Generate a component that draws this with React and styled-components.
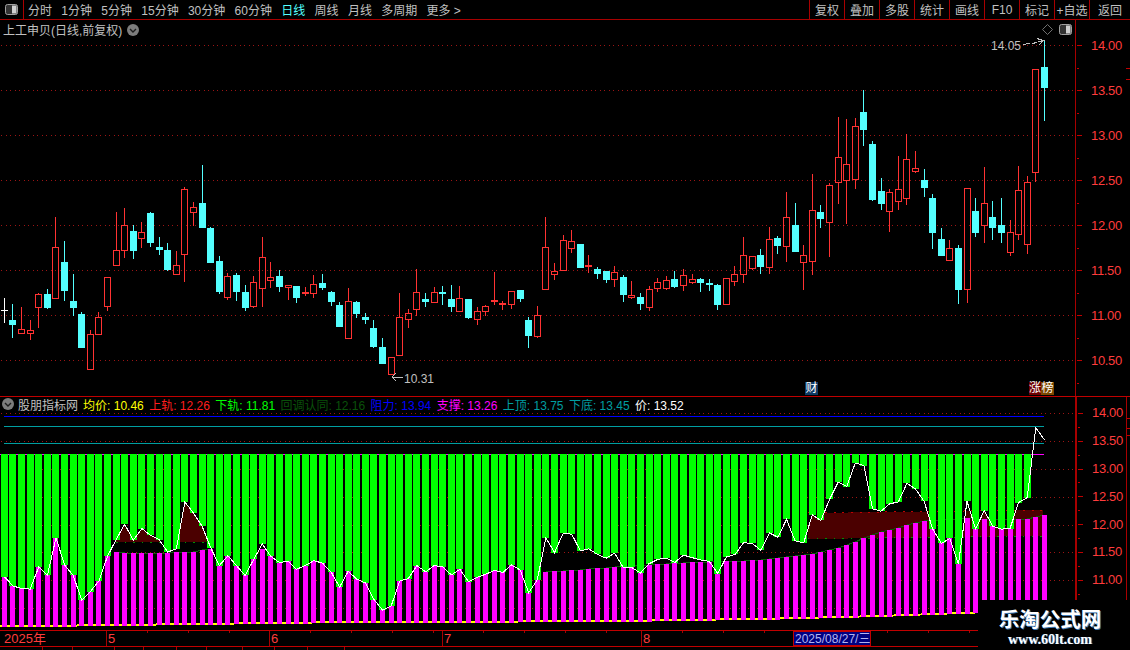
import styled, { createGlobalStyle } from "styled-components";

const GlobalStyle = createGlobalStyle`
    html, body {
        margin: 0;
        padding: 0;
        background: #000000;
    }
`;

const FONT = `"Liberation Sans", "Noto Sans CJK SC", sans-serif`;
const BORDER = "#a80000";
const GRID = "#9c1414";

// [high, bodyTop, bodyBottom, low, kind] in screen y, r = hollow red, c = cyan, w = doji
const CANDLES = [
    [298, 310, 310, 323, "w"], [304, 320, 325, 338, "c"], [307, 329, 334, 334, "r"], [320, 330, 334, 340, "r"],
    [293, 294, 308, 328, "r"], [289, 294, 308, 309, "c"], [217, 247, 299, 299, "r"], [241, 262, 291, 301, "c"],
    [274, 301, 308, 316, "c"], [312, 314, 348, 348, "c"], [330, 334, 370, 370, "r"], [312, 317, 335, 335, "r"],
    [277, 277, 307, 311, "r"], [212, 250, 266, 266, "r"], [208, 225, 251, 258, "r"], [225, 231, 251, 259, "c"],
    [222, 232, 239, 248, "r"], [212, 213, 243, 247, "c"], [237, 247, 250, 255, "c"], [243, 250, 270, 271, "c"],
    [251, 265, 275, 275, "r"], [187, 189, 255, 282, "r"], [202, 207, 213, 226, "r"], [165, 203, 228, 228, "c"],
    [227, 228, 263, 263, "c"], [256, 261, 292, 294, "c"], [273, 276, 298, 300, "r"], [273, 275, 292, 301, "c"],
    [285, 292, 308, 311, "c"], [276, 282, 307, 308, "r"], [237, 257, 289, 307, "r"], [262, 277, 281, 288, "r"],
    [270, 276, 287, 292, "c"], [285, 285, 288, 300, "r"], [286, 286, 298, 303, "c"], [287, 292, 294, 296, "r"],
    [275, 284, 294, 298, "r"], [274, 283, 288, 290, "c"], [291, 292, 302, 306, "c"], [302, 305, 327, 327, "c"],
    [288, 301, 339, 339, "r"], [301, 302, 314, 318, "c"], [313, 317, 320, 324, "c"], [320, 328, 347, 348, "c"],
    [338, 347, 364, 364, "c"], [357, 357, 375, 375, "r"], [293, 317, 356, 356, "r"], [309, 313, 320, 328, "r"],
    [269, 292, 310, 316, "r"], [293, 299, 302, 307, "c"], [287, 292, 303, 303, "r"], [286, 292, 294, 305, "c"],
    [285, 299, 307, 312, "c"], [286, 298, 312, 312, "r"], [299, 299, 318, 319, "c"], [307, 311, 320, 325, "r"],
    [305, 306, 312, 316, "r"], [272, 300, 302, 305, "r"], [301, 303, 305, 310, "r"], [291, 291, 305, 309, "r"],
    [290, 290, 299, 302, "c"], [317, 320, 336, 348, "c"], [306, 315, 337, 338, "r"], [217, 247, 290, 290, "r"],
    [263, 271, 275, 280, "r"], [235, 240, 271, 271, "r"], [230, 241, 249, 253, "r"], [244, 244, 268, 268, "c"],
    [255, 265, 267, 273, "r"], [267, 269, 274, 279, "c"], [271, 271, 280, 283, "c"], [266, 272, 280, 287, "r"],
    [275, 277, 295, 302, "c"], [281, 295, 298, 299, "r"], [293, 297, 304, 310, "c"], [286, 289, 308, 311, "r"],
    [278, 282, 289, 292, "r"], [276, 280, 289, 290, "r"], [271, 279, 287, 288, "c"], [269, 275, 286, 291, "r"],
    [274, 279, 283, 284, "r"], [278, 279, 283, 292, "c"], [279, 283, 285, 291, "c"], [284, 285, 305, 310, "c"],
    [278, 278, 305, 305, "r"], [266, 274, 282, 286, "r"], [237, 255, 275, 283, "r"], [256, 256, 269, 270, "r"],
    [249, 255, 267, 274, "c"], [227, 239, 268, 274, "r"], [236, 238, 246, 254, "c"], [192, 217, 247, 262, "r"],
    [203, 225, 252, 252, "c"], [245, 255, 263, 290, "r"], [174, 210, 262, 275, "r"], [205, 212, 219, 228, "c"],
    [183, 185, 223, 257, "r"], [117, 157, 183, 204, "r"], [119, 164, 181, 224, "r"], [118, 126, 180, 189, "r"],
    [90, 112, 130, 146, "c"], [141, 144, 200, 201, "c"], [178, 191, 204, 210, "c"], [189, 192, 212, 232, "r"],
    [156, 189, 202, 210, "r"], [134, 159, 199, 205, "r"], [151, 168, 172, 173, "r"], [169, 180, 188, 197, "c"],
    [194, 198, 233, 249, "c"], [228, 239, 256, 256, "c"], [240, 248, 261, 261, "r"], [245, 248, 290, 304, "c"],
    [188, 188, 290, 303, "r"], [198, 211, 233, 237, "c"], [167, 203, 226, 243, "r"], [201, 217, 228, 240, "c"],
    [198, 225, 233, 243, "c"], [220, 232, 253, 256, "r"], [166, 190, 235, 240, "r"], [176, 182, 245, 254, "r"],
    [69, 69, 173, 182, "r"], [40, 67, 88, 121, "c"],
];

const capFor = (i) => {
    const left = [552, 553, 553, 553, 553, 553, 553, 552, 552, 552, 550, 549];
    const mid = [572, 571, 571, 570, 570, 569, 568, 568, 567, 566, 566, 565, 565, 564, 564, 563, 563, 562, 562, 562, 561, 561, 561, 561, 560, 560, 559, 558, 557];
    const right = [556, 555, 554, 552, 550, 548, 545, 542, 538, 535, 532, 530, 528, 525, 523, 521, 520, 520, 519, 519, 518, 519, 519, 519, 519, 519, 519, 519, 517, 515];
    if (i >= 13 && i <= 24) return left[i - 13];
    if (i >= 25 && i <= 31) return 549;
    if (i >= 63 && i <= 91) return mid[i - 63];
    if (i >= 92) return right[i - 92];
    return 530;
};

const centerX = (i) => 4.4 + i * 8.595;
const leftOf = (i, w) => Math.round(centerX(i) - w / 2);
const closeOf = (c) => (c[4] === "c" ? c[2] : c[1]);
const toLower = (y) => 413 + (y - 45) * 0.6178;
const closes = CANDLES.map((c) => toLower(closeOf(c)));

const closeAtX = (x) => {
    const p = Math.max(0, Math.min(CANDLES.length - 1.001, (x - 4.4) / 8.595));
    const a = Math.floor(p);
    return closes[a] + (closes[a + 1] - closes[a]) * (p - a);
};

const BANDS = [
    { from: 116, to: 208, topA: 500, topB: 500, botA: 542, botB: 542 },
    { from: 808, to: 1043, topA: 513, topB: 510, botA: 539, botB: 536 },
];

const bandPath = (b) => {
    let d = "";
    for (let x = b.from; x < b.to; x++) {
        const t = (x - b.from) / (b.to - b.from);
        const top = Math.max(closeAtX(x + 0.5), b.topA + (b.topB - b.topA) * t);
        const bot = b.botA + (b.botB - b.botA) * t;
        if (top < bot) d += `M${x} ${Math.round(top)}h1V${Math.round(bot)}h-1z`;
    }
    return d;
};

const YELLOW = [[0, 626.5], [313, 622.5], [620, 621], [780, 618.5], [880, 616], [975, 612.5], [1045, 610]];
const yellowAt = (x) => {
    for (let i = 1; i < YELLOW.length; i++) {
        if (x <= YELLOW[i][0]) {
            const [x0, y0] = YELLOW[i - 1];
            const [x1, y1] = YELLOW[i];
            return y0 + ((y1 - y0) * (x - x0)) / (x1 - x0);
        }
    }
    return 610;
};

const Page = styled.div`
    width: 1130px;
    height: 650px;
    overflow: hidden;
    position: relative;
    background: #000000;
    font-family: ${FONT};
    font-size: 12px;
    color: #c0c0c0;
    display: flex;
    flex-direction: column;
`;

const Toolbar = styled.div`
    height: 19px;
    flex: none;
    display: flex;
    align-items: center;
    border-bottom: 1px solid ${BORDER};
`;
const PanelBox = styled.div`
    width: 23px;
    height: 19px;
    flex: none;
    display: flex;
    align-items: center;
    justify-content: center;
    border-right: 1px solid ${BORDER};
`;
const Periods = styled.div`
    display: flex;
    gap: 9.3px;
    margin-left: 4px;
    flex: 1;
`;
const Period = styled.span`
    white-space: nowrap;
    color: ${(p) => (p.$active ? "#54ffff" : "#c0c0c0")};
`;
const ToolButton = styled.div`
    width: ${(p) => p.$width || 34}px;
    height: 19px;
    flex: none;
    display: flex;
    align-items: center;
    justify-content: center;
    border-left: 1px solid ${BORDER};
    white-space: nowrap;
`;

const Pane = styled.div`
    height: ${(p) => p.$height}px;
    flex: none;
    display: flex;
    position: relative;
    box-sizing: border-box;
    border-bottom: ${(p) => (p.$ruled ? `1px solid #c00000` : "none")};
`;
const Plot = styled.div`
    width: 1075px;
    flex: none;
    svg {
        display: block;
    }
`;
const Axis = styled.div`
    flex: 1;
    box-sizing: border-box;
    position: relative;
    padding-top: ${(p) => p.$pad}px;
    border-left: ${(p) => p.$line}px solid ${BORDER};
`;
const AxisRule = styled.div`
    position: absolute;
    top: 0;
    bottom: 0;
    left: 49px;
    width: 1px;
    background: ${BORDER};
`;
const AxisMark = styled.div`
    position: absolute;
    left: ${(p) => p.$left}px;
    top: ${(p) => p.$top}px;
    width: 4px;
    height: 1px;
    background: #c00000;
`;
const AxisLabel = styled.div`
    height: ${(p) => p.$step}px;
    display: flex;
    align-items: center;
    padding-left: 15px;
    position: relative;
    color: #ff3c3c;
    font-size: 13px;
    letter-spacing: -0.35px;
    &::before {
        content: "";
        position: absolute;
        left: 1px;
        top: 50%;
        width: 5px;
        height: 1px;
        background: #c00000;
    }
    &::after {
        content: "";
        position: absolute;
        left: 1px;
        top: 100%;
        width: 2px;
        height: 1px;
        background: #c00000;
    }
`;

const Title = styled.div`
    position: absolute;
    left: 3px;
    top: 1px;
    display: flex;
    align-items: center;
    gap: 5px;
    white-space: nowrap;
`;
const CornerIcons = styled.div`
    position: absolute;
    right: 58px;
    top: 4px;
    display: flex;
    align-items: center;
    gap: 6px;
`;
const Badge = styled.span`
    position: absolute;
    top: 362px;
    left: ${(p) => p.$left}px;
    width: ${(p) => p.$width || 12}px;
    height: 13px;
    line-height: 13px;
    text-align: center;
    color: #ffffff;
    background: ${(p) => p.$bg};
`;
const ChartLabel = styled.text`
    font-family: ${FONT};
    font-size: 12px;
    fill: #c0c0c0;
`;

const Legend = styled.div`
    position: absolute;
    left: 2px;
    top: 0;
    display: flex;
    align-items: center;
    height: 14px;
    white-space: nowrap;
`;
const LegendName = styled.span`
    margin: 0 5px 0 4px;
`;
const LegendItem = styled.span`
    color: ${(p) => p.$color};
    margin-right: 5.4px;
`;

const DateAxis = styled.div`
    height: 17px;
    flex: none;
    box-sizing: border-box;
    display: flex;
    position: relative;
    border-top: 1px solid #c00000;
    border-bottom: 1px solid #c00000;
    color: #ff3c3c;
    font-size: 13px;
`;
const DateSegment = styled.div`
    width: ${(p) => p.$width}px;
    flex: none;
    box-sizing: border-box;
    padding-left: ${(p) => (p.$first ? 4 : 1)}px;
    line-height: 15px;
    border-left: ${(p) => (p.$first ? "none" : `1px solid ${BORDER}`)};
`;
const DateTicks = styled(DateSegment)`
    background-size: 41px 2px;
    background-repeat: repeat-x;
    background-image: linear-gradient(to right, ${BORDER} 1px, transparent 1px);
    background-position: 40px 0;
`;
const DateCursor = styled.div`
    position: absolute;
    left: 793px;
    top: 0;
    width: 78px;
    height: 15px;
    box-sizing: border-box;
    border: 1px solid #c00000;
    background: #000080;
    color: #b4b4f0;
    font-size: 12px;
    line-height: 14px;
    padding-left: 1px;
    white-space: nowrap;
`;
const BottomStrip = styled.div`
    height: 3px;
    flex: none;
    display: flex;
`;
const StripCell = styled.div`
    width: ${(p) => p.$width}px;
    flex: none;
    box-sizing: border-box;
    border-right: 1px solid ${BORDER};
`;

const Watermark = styled.div`
    position: absolute;
    left: 978px;
    top: 600px;
    width: 152px;
    height: 50px;
    background: #000000;
    display: flex;
    flex-direction: column;
    align-items: center;
    color: #ffffff;
    padding-right: 8px;
    box-sizing: border-box;
`;
const WatermarkTitle = styled.div`
    font-size: 20.5px;
    font-weight: 700;
    line-height: 22px;
    margin-top: 9px;
    text-shadow: 1px 1px 0 #3f7cb8;
    white-space: nowrap;
`;
const WatermarkUrl = styled.div`
    font-family: "Liberation Serif", serif;
    font-size: 14px;
    font-weight: 700;
    line-height: 14px;
    margin-top: 2px;
    text-shadow: 1px 0 0 #2f5f90;
    white-space: nowrap;
`;

const PanelIcon = () => (
    <svg width="13" height="11" viewBox="0 0 13 11">
        <rect x="0.5" y="0.5" width="12" height="10" rx="2" fill="#333333" stroke="#a0a0a0" />
        <rect x="7" y="1.5" width="4.5" height="8" fill="#d0d0d0" />
    </svg>
);

const ChevronIcon = () => (
    <svg width="12" height="12" viewBox="0 0 12 12">
        <circle cx="6" cy="6" r="6" fill="#7c7c7c" />
        <polyline points="3,5 6,8 9,5" fill="none" stroke="#1c1c1c" strokeWidth="1.4" />
    </svg>
);

const DiamondIcon = () => (
    <svg width="11" height="11" viewBox="0 0 11 11">
        <polygon points="5.5,0.5 10.5,5.5 5.5,10.5 0.5,5.5" fill="none" stroke="#707070" />
    </svg>
);

const Candle = ({ i, c }) => {
    const [hi, top, bot, lo, kind] = c;
    const left = leftOf(i, 7);
    const mid = left + 3.5;
    if (kind === "w") {
        return (
            <g stroke="#ffffff">
                <line x1={mid} x2={mid} y1={hi} y2={lo} />
                <line x1={left} x2={left + 7} y1={top + 0.5} y2={top + 0.5} />
            </g>
        );
    }
    if (kind === "c") {
        return (
            <g>
                <line x1={mid} x2={mid} y1={hi} y2={lo} stroke="#54ffff" />
                <rect x={left} y={top} width={7} height={bot - top} fill="#54ffff" />
            </g>
        );
    }
    return (
        <g stroke="#ff3232" fill="none">
            {hi < top && <line x1={mid} x2={mid} y1={hi} y2={top} />}
            {lo > bot && <line x1={mid} x2={mid} y1={bot} y2={lo} />}
            <rect x={left + 0.5} y={top + 0.5} width={6} height={Math.max(bot - top - 1, 1)} />
        </g>
    );
};

const PriceChart = () => (
    <svg width="1075" height="376" viewBox="0 20 1075 376" shapeRendering="crispEdges">
        {[45, 90, 135, 180, 225, 270, 315, 360].map((y) => (
            <line key={y} x1="1" x2="1075" y1={y + 0.5} y2={y + 0.5} stroke={GRID} strokeDasharray="1 3.5" />
        ))}
        {CANDLES.map((c, i) => (
            <Candle key={i} i={i} c={c} />
        ))}
        <g stroke="#c0c0c0" fill="none">
            <polyline points="1023,44.5 1030,43.5" />
            <polyline points="1032,43.5 1037,42.5" />
            <polyline points="1038,42 1043,40.5 1037,38.5" />
            <polyline points="1043,40.5 1039,45" />
            <polyline points="396,373 392,377 396,381" />
            <polyline points="392,377 403,377" />
        </g>
        <ChartLabel x="991" y="50">14.05</ChartLabel>
        <ChartLabel x="404" y="382.5">10.31</ChartLabel>
    </svg>
);

const IndicatorChart = () => {
    const closeLine = closes.map((y, i) => `${centerX(i).toFixed(1)},${y.toFixed(1)}`).join(" ");
    const capLine = (from, to) =>
        CANDLES.map((_, i) => i)
            .filter((i) => i >= from && i <= to)
            .map((i) => `${centerX(i).toFixed(1)},${capFor(i)}`)
            .join(" ");
    return (
        <svg width="1075" height="233" viewBox="0 397 1075 233" shapeRendering="crispEdges">
            {[413, 441, 469, 497, 525, 552, 580, 608].map((y) => (
                <line key={y} x1="1" x2="1075" y1={y + 0.5} y2={y + 0.5} stroke={GRID} strokeDasharray="1 3.5" />
            ))}
            <line x1="4" x2="1044" y1="416.5" y2="416.5" stroke="#0000ff" />
            <line x1="4" x2="1044" y1="426.5" y2="426.5" stroke="#009ea0" />
            <line x1="4" x2="1044" y1="443.5" y2="443.5" stroke="#009ea0" />
            <line x1="0" x2="1044" y1="454.5" y2="454.5" stroke="#ff00ff" />

            <polyline
                points={YELLOW.map((p) => p.join(",")).join(" ")}
                fill="none"
                stroke="#ffff00"
                strokeWidth="2"
            />
            {BANDS.map((b) => (
                <g key={b.from}>
                    <path d={bandPath(b)} fill="#4b0000" />
                    <line x1={b.from} x2={b.to} y1={b.topA} y2={b.topB} stroke="#c00000" strokeDasharray="2 6.6" />
                    <line x1={b.from} x2={b.to} y1={b.botA} y2={b.botB} stroke="#009000" strokeDasharray="1.5 7.1" />
                </g>
            ))}
            <polyline points={capLine(13, 24)} fill="none" stroke="#0a5a0a" />
            <polyline points={capLine(63, 121)} fill="none" stroke="#0a5a0a" />

            {CANDLES.map((_, i) => {
                const top = Math.round(Math.max(closes[i], capFor(i)));
                const bottom = Math.round(yellowAt(centerX(i))) + 1;
                return <rect key={i} x={leftOf(i, 5)} y={top} width={5} height={bottom - top} fill="#ff00ff" />;
            })}
            {CANDLES.map((_, i) =>
                closes[i] > 454 ? (
                    <rect
                        key={i}
                        x={leftOf(i, 7)}
                        y={454}
                        width={7}
                        height={Math.round(closes[i]) - 454}
                        fill="#00ff00"
                    />
                ) : null
            )}
            <polyline points={closeLine} fill="none" stroke="#ffffff" />
        </svg>
    );
};

const PERIODS = ["分时", "1分钟", "5分钟", "15分钟", "30分钟", "60分钟", "日线", "周线", "月线", "多周期", "更多 >"];
const TOOLS = ["复权", "叠加", "多股", "统计", "画线", "F10", "标记", "+自选"];
const UPPER_AXIS = ["14.00", "13.50", "13.00", "12.50", "12.00", "11.50", "11.00", "10.50"];
const LOWER_AXIS = ["14.00", "13.50", "13.00", "12.50", "12.00", "11.50", "11.00"];
const LEGEND = [
    ["均价", "10.46", "#ffff00"],
    ["上轨", "12.26", "#ff1e1e"],
    ["下轨", "11.81", "#00ff00"],
    ["回调认同", "12.16", "#0a500a"],
    ["阻力", "13.94", "#0000ff"],
    ["支撑", "13.26", "#ff00ff"],
    ["上顶", "13.75", "#009ea0"],
    ["下底", "13.45", "#009ea0"],
    ["价", "13.52", "#ffffff"],
];
const STRIP = [43, 30, 42, 29, 33, 30, 36, 32, 33, 37];

const App = () => (
    <Page>
        <GlobalStyle />
        <Toolbar>
            <PanelBox>
                <PanelIcon />
            </PanelBox>
            <Periods>
                {PERIODS.map((p) => (
                    <Period key={p} $active={p === "日线"}>
                        {p}
                    </Period>
                ))}
            </Periods>
            {TOOLS.map((t) => (
                <ToolButton key={t}>{t}</ToolButton>
            ))}
            <ToolButton $width={40}>返回</ToolButton>
        </Toolbar>

        <Pane $height={377} $ruled>
            <Plot>
                <PriceChart />
            </Plot>
            <Axis $pad={2.5} $line={1}>
                {UPPER_AXIS.map((v) => (
                    <AxisLabel key={v} $step={45}>
                        {v}
                    </AxisLabel>
                ))}
                <AxisMark $left={50} $top={48} />
                <AxisMark $left={50} $top={59} />
            </Axis>
            <Title>
                上工申贝(日线,前复权)
                <ChevronIcon />
            </Title>
            <CornerIcons>
                <DiamondIcon />
                <PanelIcon />
            </CornerIcons>
            <Badge $left={805} $width={13} $bg="#0f3a64">财</Badge>
            <Badge $left={1029} $bg="#6e0000">涨</Badge>
            <Badge $left={1041} $width={13} $bg="#7c4800">榜</Badge>
        </Pane>

        <Pane $height={233}>
            <Plot>
                <IndicatorChart />
            </Plot>
            <Axis $pad={2.1} $line={2}>
                <AxisRule />
                {LOWER_AXIS.map((v) => (
                    <AxisLabel key={v} $step={27.8}>
                        {v}
                    </AxisLabel>
                ))}
                <AxisMark $left={50} $top={21} />
                <AxisMark $left={50} $top={31} />
                <AxisMark $left={50} $top={38} />
            </Axis>
            <Legend>
                <ChevronIcon />
                <LegendName>股朋指标网</LegendName>
                {LEGEND.map(([name, value, color]) => (
                    <LegendItem key={name} $color={color}>
                        {name}: {value}
                    </LegendItem>
                ))}
            </Legend>
        </Pane>

        <DateAxis>
            <DateSegment $first $width={106}>2025年</DateSegment>
            <DateTicks $width={163}>5</DateTicks>
            <DateTicks $width={173}>6</DateTicks>
            <DateTicks $width={199}>7</DateTicks>
            <DateTicks $width={340}>8</DateTicks>
            <DateCursor>2025/08/27/三</DateCursor>
        </DateAxis>
        <BottomStrip>
            {STRIP.map((w, i) => (
                <StripCell key={i} $width={w} />
            ))}
        </BottomStrip>

        <Watermark>
            <WatermarkTitle>乐淘公式网</WatermarkTitle>
            <WatermarkUrl>www.60lt.com</WatermarkUrl>
        </Watermark>
    </Page>
);

export default App;
